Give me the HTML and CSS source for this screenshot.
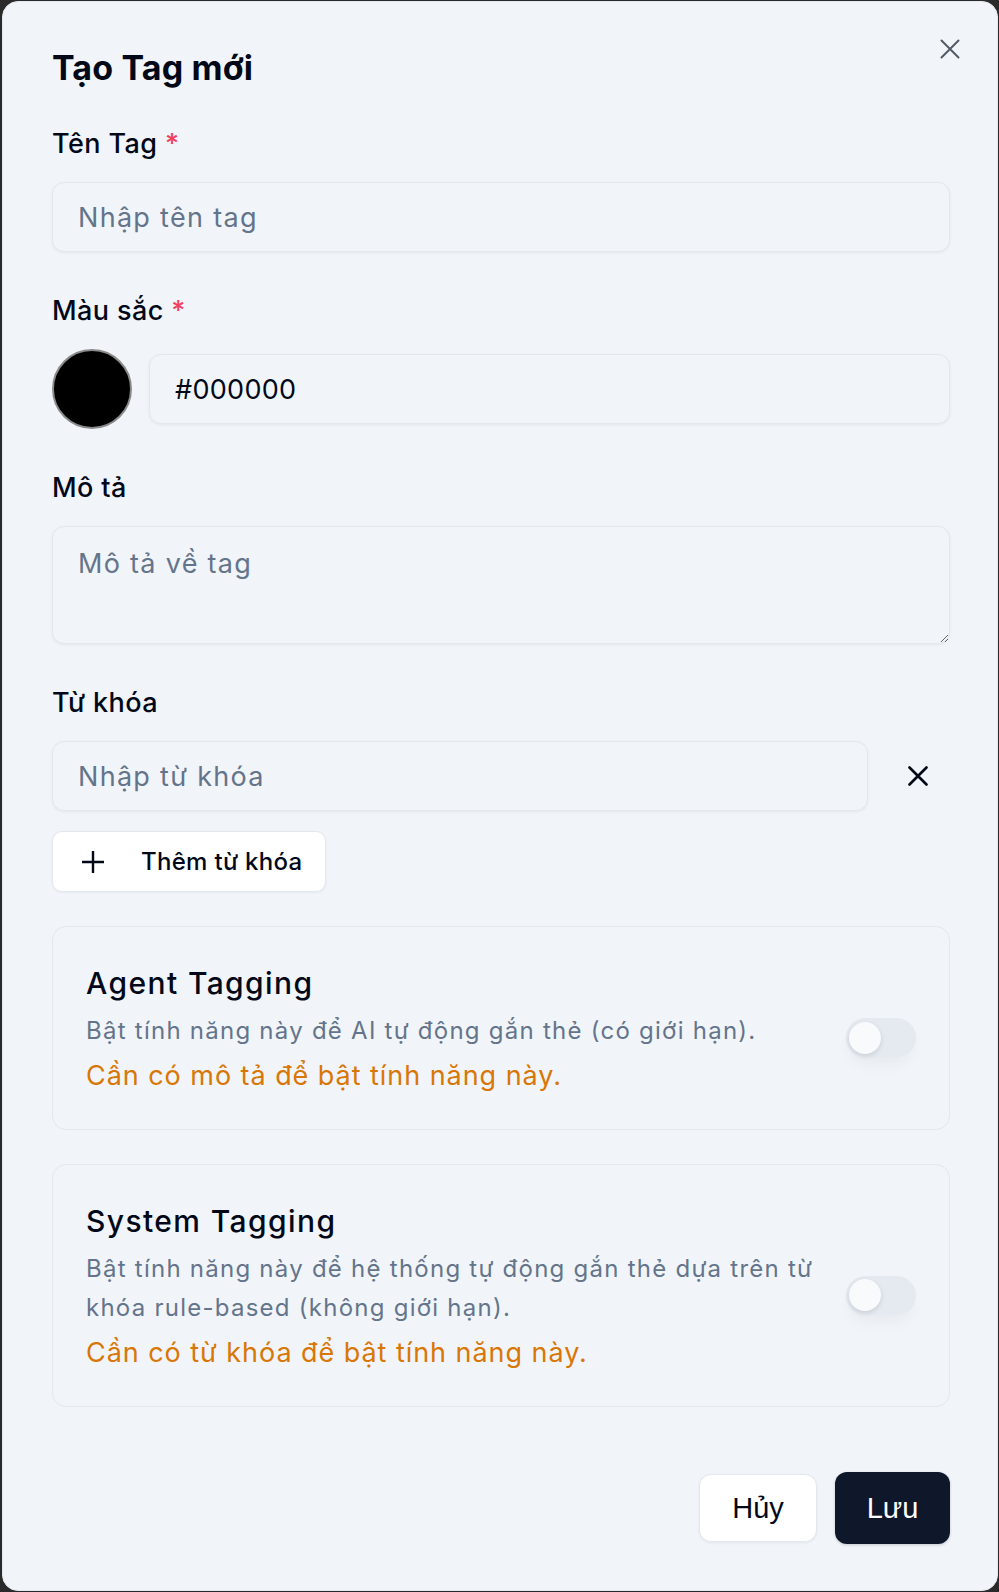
FILE: index.html
```html
<!DOCTYPE html>
<html lang="vi">
<head>
<meta charset="utf-8">
<title>Tạo Tag mới</title>
<link rel="stylesheet" href="styles.css">
</head>
<body>
<div class="dialog">
  <button type="button" class="close" aria-label="Đóng">
    <svg viewBox="0 0 20 20" width="20" height="20"><path d="M1.5 1.5L18.5 18.5M18.5 1.5L1.5 18.5"/></svg>
  </button>
  <h2 class="title">Tạo Tag mới</h2>
  <form class="form">
    <div class="field">
      <label class="label">Tên Tag <span class="req">*</span></label>
      <input class="input" type="text" placeholder="Nhập tên tag">
    </div>
    <div class="field">
      <label class="label">Màu sắc <span class="req">*</span></label>
      <div class="color-row">
        <span class="swatch"></span>
        <input class="input hex" type="text" value="#000000">
      </div>
    </div>
    <div class="field">
      <label class="label">Mô tả</label>
      <textarea class="input textarea" placeholder="Mô tả về tag"></textarea>
    </div>
    <div class="field field-last">
      <label class="label">Từ khóa</label>
      <div class="kw-row">
        <input class="input" type="text" placeholder="Nhập từ khóa">
        <button type="button" class="kw-remove" aria-label="Xóa">
          <svg viewBox="0 0 20 20" width="20" height="20"><path d="M1.5 1.5L18.5 18.5M18.5 1.5L1.5 18.5"/></svg>
        </button>
      </div>
      <button type="button" class="add-btn">
        <svg viewBox="0 0 22 22" width="22" height="22"><path d="M11 0.5V21.5M0.5 11H21.5"/></svg>
        <span>Thêm từ khóa</span>
      </button>
    </div>
    <div class="card">
      <div class="card-text">
        <div class="card-title">Agent Tagging</div>
        <div class="card-desc">Bật tính năng này để AI tự động gắn thẻ (có giới hạn).</div>
        <div class="card-warn">Cần có mô tả để bật tính năng này.</div>
      </div>
      <span class="switch"><span class="knob"></span></span>
    </div>
    <div class="card">
      <div class="card-text">
        <div class="card-title">System Tagging</div>
        <div class="card-desc">Bật tính năng này để hệ thống tự động gắn thẻ dựa trên từ khóa rule-based (không giới hạn).</div>
        <div class="card-warn">Cần có từ khóa để bật tính năng này.</div>
      </div>
      <span class="switch"><span class="knob"></span></span>
    </div>
  </form>
  <div class="footer">
    <button type="button" class="btn btn-outline">Hủy</button>
    <button type="button" class="btn btn-primary">Lưu</button>
  </div>
</div>
</body>
</html>
```

FILE: styles.css
```css
html, body {
  margin: 0;
  background: #2a2a2a;
}

body {
  font-family: Inter, "Noto Sans", sans-serif;
  color: #0f172a;
}

.dialog {
  position: relative;
  box-sizing: border-box;
  height: 1590px;
  margin: 1px 1px 1px 2px;
  padding: 44px 47px 0 49px;
  background: #f1f5f9;
  border: 1px solid #e2e8f0;
  border-radius: 16px;
}

.close {
  position: absolute;
  top: 37px;
  right: 37px;
  width: 20px;
  height: 20px;
  padding: 0;
  border: 0;
  background: none;
  display: flex;
}

.close svg path {
  fill: none;
  stroke: #525a66;
  stroke-width: 2;
  stroke-linecap: round;
}

.title {
  margin: 0 0 34px;
  font-size: 34px;
  line-height: 44px;
  font-weight: 700;
  letter-spacing: 0.15px;
  color: #020817;
}

.form {
  display: flex;
  flex-direction: column;
}

.field {
  display: flex;
  flex-direction: column;
  margin-bottom: 39px;
}

.field-last {
  margin-bottom: 34px;
}

.label {
  display: block;
  margin-bottom: 18px;
  font-size: 27px;
  line-height: 40px;
  font-weight: 500;
  letter-spacing: 0.4px;
  color: #020817;
}

.req {
  color: #f43f5e;
}

.input {
  box-sizing: border-box;
  width: 100%;
  height: 70px;
  padding: 0 25px;
  font-family: Inter, "Noto Sans", sans-serif;
  font-size: 27px;
  letter-spacing: 1.3px;
  color: #020817;
  background: #f1f5f9;
  border: 1px solid #e2e8f0;
  border-radius: 12px;
  box-shadow: 0 1px 3px rgba(15, 23, 42, 0.06);
  outline: none;
}

.input.hex {
  letter-spacing: 0.3px;
}

.input::placeholder {
  color: #64748b;
}

.textarea {
  display: block;
  height: 118px;
  padding: 17px 25px;
  line-height: 40px;
  resize: vertical;
}

.color-row {
  display: flex;
  align-items: center;
  gap: 17px;
}

.swatch {
  flex: 0 0 auto;
  box-sizing: border-box;
  width: 80px;
  height: 80px;
  border-radius: 50%;
  background: #000;
  border: 2px solid #8a8a8a;
}

.kw-row {
  display: flex;
  align-items: center;
  gap: 24px;
}

.kw-row .input {
  flex: 1 1 auto;
}

.kw-remove {
  flex: 0 0 58px;
  height: 70px;
  padding: 0 7px 0 0;
  border: 0;
  background: none;
  display: flex;
  align-items: center;
  justify-content: center;
}

.kw-remove svg {
  width: 20px;
  height: 20px;
}

.kw-remove svg path {
  fill: none;
  stroke: #020817;
  stroke-width: 2.6;
  stroke-linecap: round;
}

.add-btn {
  align-self: flex-start;
  display: inline-flex;
  align-items: center;
  gap: 37px;
  box-sizing: border-box;
  height: 61px;
  margin-top: 20px;
  padding: 0 22px 0 29px;
  font-family: Inter, "Noto Sans", sans-serif;
  font-size: 24px;
  font-weight: 500;
  letter-spacing: 0.3px;
  color: #020817;
  background: #ffffff;
  border: 1px solid #e2e8f0;
  border-radius: 10px;
  box-shadow: 0 1px 3px rgba(15, 23, 42, 0.05);
}

.add-btn svg path {
  fill: none;
  stroke: #020817;
  stroke-width: 2.4;
  stroke-linecap: round;
}

.card {
  display: flex;
  align-items: center;
  gap: 24px;
  margin-bottom: 34px;
  padding: 34px 33px 33px 33px;
  background: #f1f5f9;
  border: 1px solid #e2e8f0;
  border-radius: 14px;
}

.card-text {
  flex: 1 1 auto;
  min-width: 0;
}

.card-title {
  font-size: 30px;
  line-height: 45px;
  font-weight: 500;
  letter-spacing: 1.4px;
  color: #020817;
}

.card-desc {
  margin-top: 5px;
  font-size: 24px;
  line-height: 39px;
  letter-spacing: 1.25px;
  color: #64748b;
}

.card-warn {
  margin-top: 6px;
  font-size: 27px;
  line-height: 40px;
  letter-spacing: 0.95px;
  color: #d97706;
}

.switch {
  flex: 0 0 auto;
  position: relative;
  box-sizing: border-box;
  width: 70px;
  height: 39px;
  margin-top: 18px;
  border-radius: 999px;
  background: #e5e9f0;
  box-shadow: 0 10px 18px -6px rgba(15, 23, 42, 0.06);
}

.knob {
  position: absolute;
  top: 3.5px;
  left: 2.5px;
  width: 32px;
  height: 32px;
  border-radius: 50%;
  background: #f8fafc;
  box-shadow: 0 2px 5px rgba(15, 23, 42, 0.12);
}

.footer {
  display: flex;
  justify-content: flex-end;
  align-items: center;
  gap: 18px;
  margin-top: 31px;
}

.btn {
  box-sizing: border-box;
  font-family: "Liberation Sans", Arial, sans-serif;
  font-size: 29px;
  border-radius: 12px;
  cursor: pointer;
}

.btn-outline {
  width: 118px;
  height: 68px;
  color: #020817;
  background: #ffffff;
  border: 1px solid #e2e8f0;
  box-shadow: 0 1px 3px rgba(15, 23, 42, 0.06);
}

.btn-primary {
  width: 115px;
  height: 72px;
  color: #ffffff;
  background: #0f172a;
  border: 0;
  box-shadow: 0 1px 3px rgba(15, 23, 42, 0.2);
}
```
